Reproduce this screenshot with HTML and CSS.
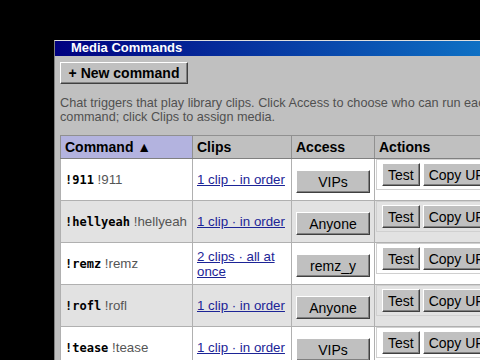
FILE: index.html
```html
<!DOCTYPE html>
<html lang="en">
<head>
    <meta charset="UTF-8">
    <title>Media Commands</title>
    <link rel="stylesheet" href="styles.css">
</head>
<body>
    <div class="window">
        <div class="titlebar">Media Commands</div>
        <div class="content">
            <button class="btn btn-new">+ New command</button>
            <p class="hint">Chat triggers that play library clips. Click Access to choose who can run each command; click Clips to assign media.</p>
            <table class="commands">
                <thead>
                    <tr>
                        <th class="sorted col-cmd">Command ▲</th>
                        <th class="col-clips">Clips</th>
                        <th class="col-access">Access</th>
                        <th class="col-actions">Actions</th>
                    </tr>
                </thead>
                <tbody>
                    <tr>
                        <td><span class="trigger">!911</span> <span class="label">!911</span></td>
                        <td><a href="#">1 clip · in order</a></td>
                        <td><button class="btn btn-access">VIPs</button></td>
                        <td class="actions"><div class="action-box"><button class="btn">Test</button><button class="btn">Copy URL</button><button class="btn">Delete</button></div></td>
                    </tr>
                    <tr>
                        <td><span class="trigger">!hellyeah</span> <span class="label">!hellyeah</span></td>
                        <td><a href="#">1 clip · in order</a></td>
                        <td><button class="btn btn-access">Anyone</button></td>
                        <td class="actions"><div class="action-box"><button class="btn">Test</button><button class="btn">Copy URL</button><button class="btn">Delete</button></div></td>
                    </tr>
                    <tr>
                        <td><span class="trigger">!remz</span> <span class="label">!remz</span></td>
                        <td><a href="#">2 clips · all at once</a></td>
                        <td><button class="btn btn-access">remz_y</button></td>
                        <td class="actions"><div class="action-box"><button class="btn">Test</button><button class="btn">Copy URL</button><button class="btn">Delete</button></div></td>
                    </tr>
                    <tr>
                        <td><span class="trigger">!rofl</span> <span class="label">!rofl</span></td>
                        <td><a href="#">1 clip · in order</a></td>
                        <td><button class="btn btn-access">Anyone</button></td>
                        <td class="actions"><div class="action-box"><button class="btn">Test</button><button class="btn">Copy URL</button><button class="btn">Delete</button></div></td>
                    </tr>
                    <tr>
                        <td><span class="trigger">!tease</span> <span class="label">!tease</span></td>
                        <td><a href="#">1 clip · in order</a></td>
                        <td><button class="btn btn-access">VIPs</button></td>
                        <td class="actions"><div class="action-box"><button class="btn">Test</button><button class="btn">Copy URL</button><button class="btn">Delete</button></div></td>
                    </tr>
                </tbody>
            </table>
        </div>
    </div>
</body>
</html>
```

FILE: styles.css
```css
html, body {
    margin: 0;
    height: 100%;
    overflow: hidden;
}
body {
    background: #000;
    font-family: "Liberation Sans", Arial, sans-serif;
    padding: 40px 0 0 54px;
}
.window {
    width: 500px;
    background: #c0c0c0;
    border-left: 1px solid #808080;
    border-top: 1px solid #dfdfdf;
}
.titlebar {
    height: 15px;
    line-height: 13px;
    padding-left: 16px;
    background: linear-gradient(to right, #000080, #1084d0);
    color: #fff;
    font-weight: bold;
    font-size: 13px;
}
.content {
    padding: 6px 5px 0 5px;
}
.btn {
    font-family: "Liberation Sans", Arial, sans-serif;
    font-size: 14px;
    color: #000;
    background: #c0c0c0;
    border: 1px solid;
    border-color: #fff #404040 #404040 #fff;
    box-shadow: inset -1px -1px 0 #808080;
    padding: 0 6px;
    height: 23px;
    margin: 0;
}
.btn-new {
    font-weight: bold;
    width: 128px;
    height: 22px;
}
.hint {
    margin: 12px 0 11px;
    font-size: 12.7px;
    line-height: 14px;
    color: #505050;
    width: 432px;
}
.commands {
    border-collapse: collapse;
    border: 1px solid #808080;
    width: 515px;
    font-size: 13.3px;
}
.commands th {
    background: #c0c0c0;
    text-align: left;
    font-size: 14px;
    height: 22px;
    padding: 0 4px;
    border: 1px solid #909090;
    border-bottom-color: #808080;
}
.commands th.sorted {
    background: #b3b3df;
}
.col-cmd { width: 123px; }
.col-clips { width: 90px; }
.col-access { width: 73px; }
.commands td {
    height: 41px;
    padding: 0 4px;
    border: 1px solid #b0b0b0;
    background: #fff;
}
.commands tbody tr:nth-child(even) td {
    background: #e2e2e2;
}
.trigger {
    font-family: "DejaVu Sans Mono", monospace;
    font-weight: bold;
    font-size: 12px;
}
.label {
    color: #555;
}
.commands a {
    color: #1c2496;
}
.btn-access {
    width: 74px;
    margin-top: 4px;
}
.commands td.actions {
    vertical-align: top;
    padding: 0 0 0 1px;
    white-space: nowrap;
}
.action-box {
    display: flex;
    gap: 3px;
    height: 26px;
    padding: 3px 0 0 5px;
    border: 1px solid #d0d0d0;
    border-right: none;
}
.action-box .btn {
    height: 23px;
    padding: 0 5px;
}
```
